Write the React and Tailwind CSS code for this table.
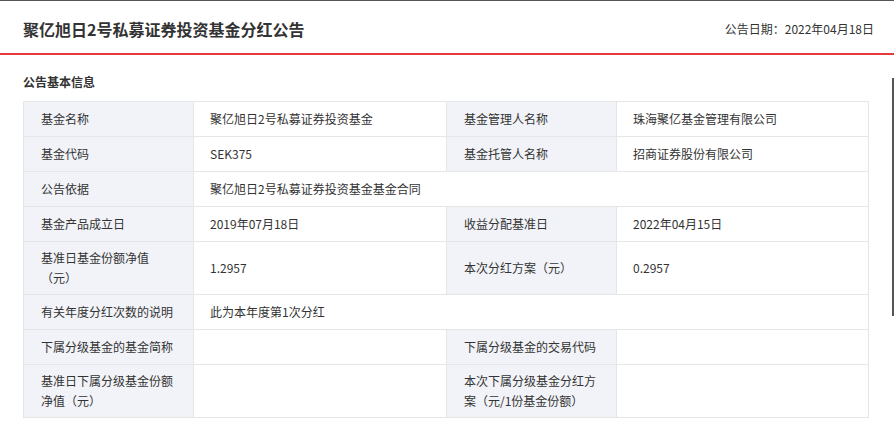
import React from 'react';

const rows = [
  { h: 'h-[35px]', cells: [['基金名称', '聚亿旭日2号私募证券投资基金'], ['基金管理人名称', '珠海聚亿基金管理有限公司']] },
  { h: 'h-[35px]', cells: [['基金代码', 'SEK375'], ['基金托管人名称', '招商证券股份有限公司']] },
  { h: 'h-[35px]', wide: ['公告依据', '聚亿旭日2号私募证券投资基金基金合同'] },
  { h: 'h-[35px]', cells: [['基金产品成立日', '2019年07月18日'], ['收益分配基准日', '2022年04月15日']] },
  { h: 'h-[53px]', cells: [[<>基准日基金份额净值<br />（元）</>, '1.2957'], ['本次分红方案（元）', '0.2957']] },
  { h: 'h-[35px]', wide: ['有关年度分红次数的说明', '此为本年度第1次分红'] },
  { h: 'h-[35px]', cells: [['下属分级基金的基金简称', ''], ['下属分级基金的交易代码', '']] },
  { h: 'h-[53px]', cells: [['基准日下属分级基金份额净值（元）', ''], ['本次下属分级基金分红方案（元/1份基金份额）', '']] },
];

const label = 'border border-[#e3e8e6] bg-[#f2f3f8] pl-[17px] pr-3 text-left align-middle font-normal leading-5';
const value = 'border border-[#e3e8e6] bg-white pl-[16px] pr-3 align-middle leading-5';

export default function App() {
  return (
    <div
      className="relative w-[894px] h-[445px] overflow-hidden bg-white border-t border-[#555] text-[#333]"
      style={{ fontFamily: '"Noto Sans CJK SC", "Noto Sans", sans-serif' }}
    >
      {/* ── Header ─────────────────────────────── */}
      <div className="flex h-[54px] items-center justify-between pl-[23px] pr-[20px] border-b-2 border-[#e5393b]">
        <h1 className="text-[16px] font-bold text-[#333] pt-[4px]">聚亿旭日2号私募证券投资基金分红公告</h1>
        <span className="text-[12px] text-[#333] pt-[4px]">公告日期：2022年04月18日</span>
      </div>

      {/* ── Body ───────────────────────────────── */}
      <div className="pl-[23px] pr-[26px]">
        <h2 className="pt-[18px] pb-[10px] text-[12px] font-bold leading-[18px] text-[#333]">公告基本信息</h2>
        <table className="w-[845px] table-fixed border-collapse text-[12px] text-[#333]">
          <colgroup>
            <col className="w-[170px]" />
            <col className="w-[253px]" />
            <col className="w-[170px]" />
            <col className="w-[252px]" />
          </colgroup>
          <tbody>
            {rows.map((r, i) => (
              <tr key={i} className={r.h}>
                {r.wide ? (
                  <>
                    <th className={label}>{r.wide[0]}</th>
                    <td className={value} colSpan={3}>{r.wide[1]}</td>
                  </>
                ) : (
                  r.cells.map(([k, v], j) => (
                    <React.Fragment key={j}>
                      <th className={label}>{k}</th>
                      <td className={value}>{v}</td>
                    </React.Fragment>
                  ))
                )}
              </tr>
            ))}
          </tbody>
        </table>
      </div>

      {/* scrollbar thumb */}
      <div className="absolute right-0 top-[77px] h-[238px] w-[2px] bg-[#555]" />
    </div>
  );
}
